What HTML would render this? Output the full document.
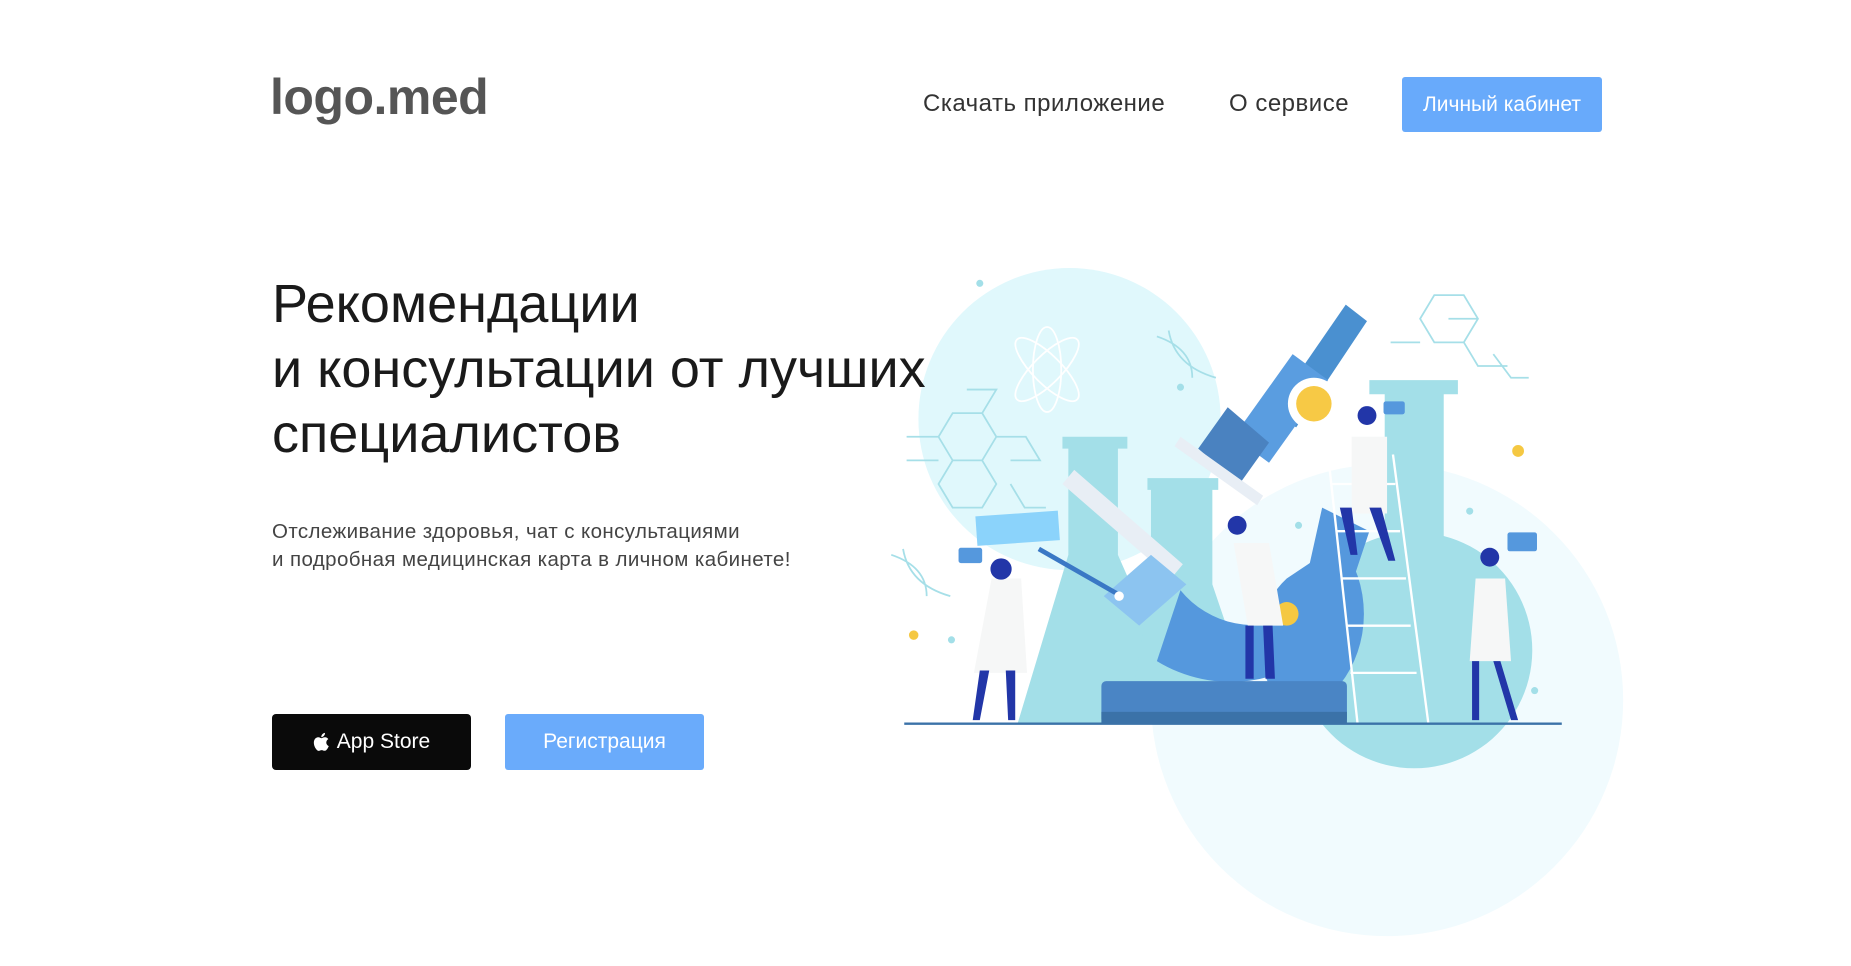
<!DOCTYPE html>
<html><head><meta charset="utf-8"><style>
html,body{margin:0;padding:0;background:#fff;width:1851px;height:966px;overflow:hidden;position:relative;font-family:"Liberation Sans",sans-serif}
.abs{position:absolute}
.logo{left:270px;top:68px;font-size:50px;font-weight:bold;color:#555;letter-spacing:-0.5px}
.nav{top:90px;font-size:24px;color:#333;letter-spacing:0.5px}
.btn{display:flex;align-items:center;justify-content:center;border-radius:3px;color:#fff;font-size:21px}
h1{margin:0;position:absolute;left:272px;top:272px;font-weight:normal;font-size:54px;line-height:65px;color:#1a1a1a}
.p{left:272px;top:518px;font-size:20.5px;line-height:28px;color:#444;letter-spacing:0.4px}
svg{position:absolute;left:0;top:0}
</style></head><body>
<svg width="1851" height="966" viewBox="0 0 1568 818.3">
<circle cx="1175" cy="593" r="200" fill="#f1fbfe"/>
<circle cx="906" cy="355" r="128" fill="#e0f8fc"/>
<g stroke="#a6dfe8" stroke-width="1.5" fill="none">
<path d="M795 370l12-20h25l12 20-12 20h-25zM807 390l-12 20 12 20h25l12-20-12-20M832 350l12-20h-25M844 370h25l12 20h-25M768 370h27M768 390h27M856 410l12 20h18"/>
<path d="M1203 270l12-20h25l12 20-12 20h-25zM1240 290l12 20h25M1252 270h-25M1178 290h25M1265 300l15 20h15"/>
<ellipse cx="887" cy="313" rx="12" ry="36" stroke="#fff"/><ellipse cx="887" cy="313" rx="36" ry="12" transform="rotate(45 887 313)" stroke="#fff"/><ellipse cx="887" cy="313" rx="36" ry="12" transform="rotate(-45 887 313)" stroke="#fff"/>
<path d="M980 285q30 10 30 35M990 280q5 30 40 40M755 470q30 10 30 35M765 465q5 30 40 40"/>
</g>
<g fill="#a3dfe8">
<circle cx="830" cy="240" r="3"/><circle cx="1000" cy="328" r="3"/><circle cx="806" cy="542" r="3"/><circle cx="1245" cy="433" r="3"/><circle cx="1300" cy="585" r="3"/><circle cx="1100" cy="445" r="3"/>
<path d="M900 370h55v10h-8v90l63 143H862l43-143v-90h-5z"/>
<path d="M972 405h60v10h-5v80l40 118H955l20-118v-80h-3z"/>
<path d="M1160 322h75v12h-12v120a100 100 0 1 1-50 0V334h-13z"/>
</g>
<circle cx="774" cy="538" r="4" fill="#f5c842"/><circle cx="1286" cy="382" r="5" fill="#f5c842"/>
<path d="M1000 500a80 80 0 0 0 100 20l20-90 40 20-30 90a120 120 0 0 1-150 20z" fill="#5598dd"/>
<path d="M1090 490a60 70 0 0 0-15 90h60a80 90 0 0 0 0-120z" fill="#5598dd"/>
<path d="M1140 258l18 14-60 90-20-14z" fill="#4a90d0"/>
<path d="M1095 300l30 22-50 70-30-22z" fill="#5a9de0"/>
<path d="M1040 345l35 30-25 35-35-30z" fill="#4a82c0"/>
<circle cx="1113" cy="342" r="22" fill="#fff"/><circle cx="1113" cy="342" r="15" fill="#f7c945"/>
<path d="M1000 370l70 50-5 8-70-50z" fill="#e8eef5"/>
<path d="M910 398l92 80-10 12-92-80z" fill="#e8eef5"/>
<path d="M975 470l30 25-40 35-30-25z" fill="#8cc4f0"/>
<line x1="880" y1="465" x2="950" y2="505" stroke="#3a78c5" stroke-width="4"/>
<circle cx="948" cy="505" r="4" fill="#fff"/>
<rect x="827" y="435" width="70" height="25" fill="#8bd3fb" transform="rotate(-4 862 447)"/>
<circle cx="1090" cy="520" r="10" fill="#f5c842"/>
<rect x="933" y="577" width="208" height="36" rx="4" fill="#4a85c5"/>
<rect x="933" y="603" width="208" height="10" fill="#3b72a8"/>
<g stroke="#fff" stroke-width="2"><path d="M1125 385l25 228M1180 385l30 228M1128 410h54M1133 450h53M1137 490h54M1140 530h55M1144 570h56"/></g>
<g fill="#f6f7f7"><path d="M840 490h25l5 80h-45z"/><path d="M1045 460h30l12 70h-30z"/><path d="M1145 370h30v65h-30z"/><path d="M1250 490h25l5 70h-35z"/></g>
<g fill="#2236a8"><path d="M830 568h8l-8 42h-6zM852 568h8v42h-6zM1055 530h7v45h-7zM1070 530h8l2 45h-8zM1135 430h10l5 40h-6zM1160 430h10l12 45h-6zM1247 560h6v50h-6zM1265 560h6l15 50h-6z"/>
<circle cx="848" cy="482" r="9"/><circle cx="1048" cy="445" r="8"/><circle cx="1158" cy="352" r="8"/><circle cx="1262" cy="472" r="8"/></g>
<g fill="#5598dd"><rect x="812" y="464" width="20" height="13" rx="2"/><rect x="1172" y="340" width="18" height="11" rx="2"/><rect x="1277" y="451" width="25" height="16" rx="2"/></g>
<line x1="766" y1="613" x2="1323" y2="613" stroke="#3b72a8" stroke-width="2"/>
</svg>
<div class="abs logo">logo.med</div>
<div class="abs nav" style="left:923px">Скачать приложение</div>
<div class="abs nav" style="left:1229px">О сервисе</div>
<div class="abs btn" style="left:1402px;top:77px;width:200px;height:55px;background:#68aafb">Личный кабинет</div>
<h1>Рекомендации<br>и консультации от лучших<br>специалистов</h1>
<div class="abs p">Отслеживание здоровья, чат с консультациями<br>и подробная медицинская карта в личном кабинете!</div>
<div class="abs btn" style="left:272px;top:714px;width:199px;height:56px;background:#0a0a0a;border-radius:4px"><svg style="position:static;margin-right:8px" width="16" height="20" viewBox="0 0 16 20"><path fill="#fff" d="M13.3 10.6c0-2.3 1.9-3.4 2-3.5-1.1-1.6-2.8-1.8-3.4-1.8-1.4-.1-2.8.9-3.5.9s-1.8-.9-3-.9C3.800 5.300 2.400 6.200 1.600 7.500c-1.600 2.800-.4 6.900 1.200 9.100.8 1.100 1.700 2.300 2.900 2.300 1.200-.1 1.600-.8 3-.8s1.800.8 3 .7c1.300 0 2-1.100 2.800-2.200.9-1.300 1.200-2.500 1.300-2.600-.1 0-2.500-1-2.500-3.400zM11 3.800c.6-.8 1.100-1.800 1-2.900-.9 0-2 .6-2.700 1.400-.6.700-1.100 1.800-1 2.800 1 .1 2-.5 2.700-1.300z"/></svg>App Store</div>
<div class="abs btn" style="left:505px;top:714px;width:199px;height:56px;background:#6aabfb">Регистрация</div>
</body></html>
